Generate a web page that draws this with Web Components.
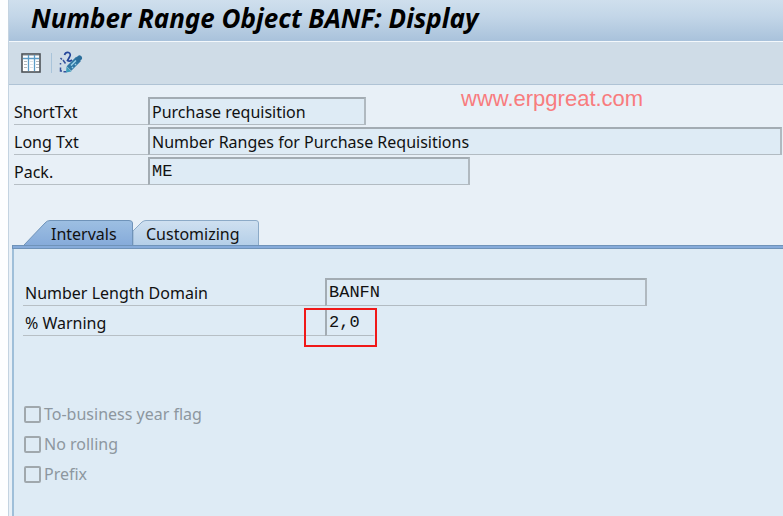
<!DOCTYPE html>
<html lang="en">
<head>
<meta charset="utf-8">
<title>Number Range Object BANF: Display</title>
<style>
  body {
    margin: 0;
    background: #fdfeff;
    color: #111;
    font-family: "Noto Sans", sans-serif;
    font-size: 16px;
  }
</style>
</head>
<body>
<nr-screen>
  <nr-title slot="title">Number Range Object BANF: Display</nr-title>
  <nr-toolbar slot="toolbar"></nr-toolbar>
  <nr-watermark slot="form">www.erpgreat.com</nr-watermark>
  <nr-field slot="form" label="ShortTxt" value="Purchase requisition" size="short"></nr-field>
  <nr-field slot="form" label="Long Txt" value="Number Ranges for Purchase Requisitions" size="full"></nr-field>
  <nr-field slot="form" label="Pack." value="ME" size="medium" mono></nr-field>
  <nr-tabs>
    <nr-field slot="fields" label="Number Length Domain" value="BANFN" size="medium" mono></nr-field>
    <nr-field slot="fields" label="% Warning" value="2,0" size="tiny" mono marked></nr-field>
    <nr-check slot="flags" label="To-business year flag"></nr-check>
    <nr-check slot="flags" label="No rolling"></nr-check>
    <nr-check slot="flags" label="Prefix"></nr-check>
  </nr-tabs>
</nr-screen>

<script>
class Screen extends HTMLElement {
  constructor() {
    super()

    this.attachShadow({ mode: 'open' })
    this.shadowRoot.innerHTML = `
      <style>
        :host {
          display: flex;
          flex-direction: column;
          box-sizing: border-box;
          min-height: 100vh;
          margin-left: 8px;
          border-left: 1px solid #c3d3e1;
          background: #e8f0f7;
        }

        #form {
          --label-width: 134px;
          position: relative;
          display: flex;
          flex-direction: column;
          gap: 2px;
          padding: 12px 1px 0 5px;
        }

        main {
          display: flex;
          flex-direction: column;
          flex: 1;
          padding: 35px 0 0 3px;
        }
      </style>
      <slot name="title"></slot>
      <slot name="toolbar"></slot>
      <section id="form"><slot name="form"></slot></section>
      <main><slot></slot></main>
    `
  }
}

class Title extends HTMLElement {
  constructor() {
    super()

    this.attachShadow({ mode: 'open' })
    this.shadowRoot.innerHTML = `
      <style>
        :host {
          display: block;
          padding: 0 22px;
          background: linear-gradient(#cfdfed, #c3d6e8 40%, #a9c2db);
          border-bottom: 1px solid #f3f8fc;
        }

        h1 {
          margin: 0;
          font: italic bold 26px/36px "Noto Sans", sans-serif;
          padding-bottom: 5px;
          color: #000;
          white-space: nowrap;
        }
      </style>
      <h1><slot></slot></h1>
    `
  }
}

class Toolbar extends HTMLElement {
  constructor() {
    super()

    this.attachShadow({ mode: 'open' })
    this.shadowRoot.innerHTML = `
      <style>
        :host {
          display: flex;
          align-items: center;
          height: 42px;
          padding-left: 12px;
          background: #cfdce7;
          border-bottom: 1px solid #afc3d5;
        }

        button {
          display: flex;
          padding: 0;
          border: 0;
          background: none;
        }

        #separator {
          width: 1px;
          height: 20px;
          margin: 0 7px 0 10px;
          background: #a9c4da;
        }
      </style>
      <button type="button" aria-label="Display intervals">
        <svg width="20" height="22" viewBox="0 0 20 22">
          <rect x="1" y="2" width="18" height="18" fill="#fff" stroke="#4d5358" stroke-width="1.6"/>
          <path d="M2 3.5h16" stroke="#b9c3cb"/>
          <path d="M2 6.5h16M7.5 3v16M13.5 3v16" stroke="#5b9cc7" stroke-width="1.3"/>
          <path d="M3 9.5h3M3 12.5h3M3 15.5h3M15 9.5h3M15 12.5h3M15 15.5h3" stroke="#b3b8bc"/>
          <path d="M9 9.5h3M9 12.5h3M9 15.5h3" stroke="#dde3e8"/>
        </svg>
      </button>
      <span id="separator"></span>
      <button type="button" aria-label="Change current number">
        <svg width="24" height="24" viewBox="0 0 24 24" fill="none">
          <path d="M1.500 7l1.500 1.500M4 9l2.500 3.500M1.500 12v1.500M1.500 16.500v3.500h1.500M4.500 20.800h3" stroke="#35529c" stroke-width="1.500"/>
          <path d="M5.500 4Q6.500 1 9.500 1.500q3 1.500 1 4.500l-2 3.500q2 1.500 4.500-.5" stroke="#24469a" stroke-width="1.700"/>
          <path d="M10 17.500L19.500 8" stroke="#2f76a3" stroke-width="6.500"/>
          <path d="M19 8.500l1.500-1.500" stroke="#2b6e9b" stroke-width="5" stroke-linecap="round"/>
          <path d="M7.500 15.500L7 21.500l5.500-1z" fill="#3d9cba"/>
          <path d="M12 14.500l5-5M13 17l1-1M16 14l1-1" stroke="#9bd0e8" stroke-width="1.500"/>
        </svg>
      </button>
    `
  }
}

class Field extends HTMLElement {
  constructor() {
    super()

    this.attachShadow({ mode: 'open' })
    this.shadowRoot.innerHTML = `
      <style>
        :host {
          position: relative;
          display: flex;
        }

        label {
          box-sizing: border-box;
          flex: none;
          width: var(--label-width);
          height: 28px;
          padding-left: var(--label-indent, 0);
          border-bottom: 1px solid #b7bfc5;
          line-height: 30px;
          white-space: nowrap;
        }

        #box {
          position: relative;
          display: flex;
          min-width: 0;
        }

        input {
          box-sizing: border-box;
          width: 100%;
          min-width: 0;
          height: 28px;
          margin: 0;
          padding: 0 2px;
          border: 2px solid #a3acb3;
          border-right-color: #b0b9c0;
          border-bottom: 1px solid #b2bbc2;
          border-radius: 0;
          background: #deebf5;
          color: inherit;
          font: inherit;
          outline: none;
        }

        :host([mono]) input {
          font: 17px "Courier New", "Liberation Mono", monospace;
        }

        :host([size="short"]) #box { width: 218px; }
        :host([size="medium"]) #box { width: 322px; }
        :host([size="full"]) #box { flex: 1; }
        :host([size="tiny"]) #box { width: 50px; }

        :host([marked]) input {
          border-top-color: transparent;
          border-right-color: transparent;
        }

        :host([marked]) #box::after {
          content: "";
          position: absolute;
          inset: 0 -2px -11px -21px;
          border: 2px solid #f01818;
          pointer-events: none;
        }
      </style>
      <label for="value"></label>
      <div id="box"><input id="value" type="text" readonly></div>
    `
  }

  connectedCallback() {
    this.shadowRoot.querySelector('label').textContent = this.getAttribute('label')
    this.shadowRoot.querySelector('input').value = this.getAttribute('value')
  }
}

class Watermark extends HTMLElement {
  constructor() {
    super()

    this.attachShadow({ mode: 'open' })
    this.shadowRoot.innerHTML = `
      <style>
        :host {
          position: absolute;
          top: 2px;
          left: 452px;
          color: #f87c7e;
          font: 22px/24px "Liberation Sans", sans-serif;
        }
      </style>
      <slot></slot>
    `
  }
}

class Tabs extends HTMLElement {
  constructor() {
    super()

    this.attachShadow({ mode: 'open' })
    this.shadowRoot.innerHTML = `
      <style>
        :host {
          display: flex;
          flex-direction: column;
          flex: 1;
        }

        #tabs {
          display: flex;
          padding-left: 12px;
        }

        button {
          position: relative;
          height: 25px;
          padding: 0;
          border: 0;
          background: none;
          color: inherit;
          font: inherit;
          line-height: 28px;
          text-align: left;
        }

        button span {
          position: relative;
        }

        svg {
          position: absolute;
          inset: 0;
        }

        #intervals {
          width: 109px;
          padding-left: 27px;
        }

        #customizing {
          width: 126px;
          padding-left: 13px;
        }

        #stripe {
          height: 2px;
          border: solid #6f93b9;
          border-width: 1px 0 1px 1px;
          background: #86abda;
        }

        #panel {
          --label-width: 302px;
          --label-indent: 2px;
          flex: 1;
          border-left: 2px solid #9fbfd9;
          background: #deebf5;
          padding: 29px 0 0 9px;
        }

        #fields {
          display: flex;
          flex-direction: column;
          gap: 2px;
        }

        #flags {
          display: flex;
          flex-direction: column;
          gap: 6px;
          padding: 66px 0 16px;
        }
      </style>
      <div id="tabs" role="tablist">
        <button id="intervals" type="button" role="tab" aria-selected="true">
          <svg width="109" height="25" viewBox="0 0 109 25">
            <defs>
              <linearGradient id="on" x2="0" y2="1">
                <stop stop-color="#9dbfe2"/>
                <stop offset="1" stop-color="#86abda"/>
              </linearGradient>
            </defs>
            <path d="M0 25L21 3Q23 .5 26 .5H105Q108.500 .5 108.500 3V25" fill="url(#on)" stroke="#6f93b9"/>
          </svg>
          <span>Intervals</span>
        </button>
        <button id="customizing" type="button" role="tab" aria-selected="false">
          <svg width="126" height="25" viewBox="0 0 126 25">
            <defs>
              <linearGradient id="off" x2="0" y2="1">
                <stop stop-color="#cfe0f0"/>
                <stop offset="1" stop-color="#b5cfe8"/>
              </linearGradient>
            </defs>
            <path d="M0 25V11L9 2Q11 .5 13 .5H123Q125.500 .5 125.500 3V25" fill="url(#off)" stroke="#8caac7"/>
          </svg>
          <span>Customizing</span>
        </button>
      </div>
      <div id="stripe"></div>
      <div id="panel" role="tabpanel">
        <div id="fields"><slot name="fields"></slot></div>
        <div id="flags"><slot name="flags"></slot></div>
      </div>
    `
  }
}

class Check extends HTMLElement {
  constructor() {
    super()

    this.attachShadow({ mode: 'open' })
    this.shadowRoot.innerHTML = `
      <style>
        :host {
          display: flex;
          align-items: center;
          gap: 3px;
          height: 24px;
          color: #8d979f;
        }

        input {
          appearance: none;
          box-sizing: border-box;
          width: 17px;
          height: 17px;
          margin: 0 0 0 1px;
          border: 2px solid #a0a8ad;
          border-radius: 2px;
        }
      </style>
      <input id="flag" type="checkbox" disabled>
      <label for="flag"></label>
    `
  }

  connectedCallback() {
    this.shadowRoot.querySelector('label').textContent = this.getAttribute('label')
  }
}

customElements.define('nr-screen', Screen)
customElements.define('nr-title', Title)
customElements.define('nr-toolbar', Toolbar)
customElements.define('nr-field', Field)
customElements.define('nr-watermark', Watermark)
customElements.define('nr-tabs', Tabs)
customElements.define('nr-check', Check)
</script>
</body>
</html>
